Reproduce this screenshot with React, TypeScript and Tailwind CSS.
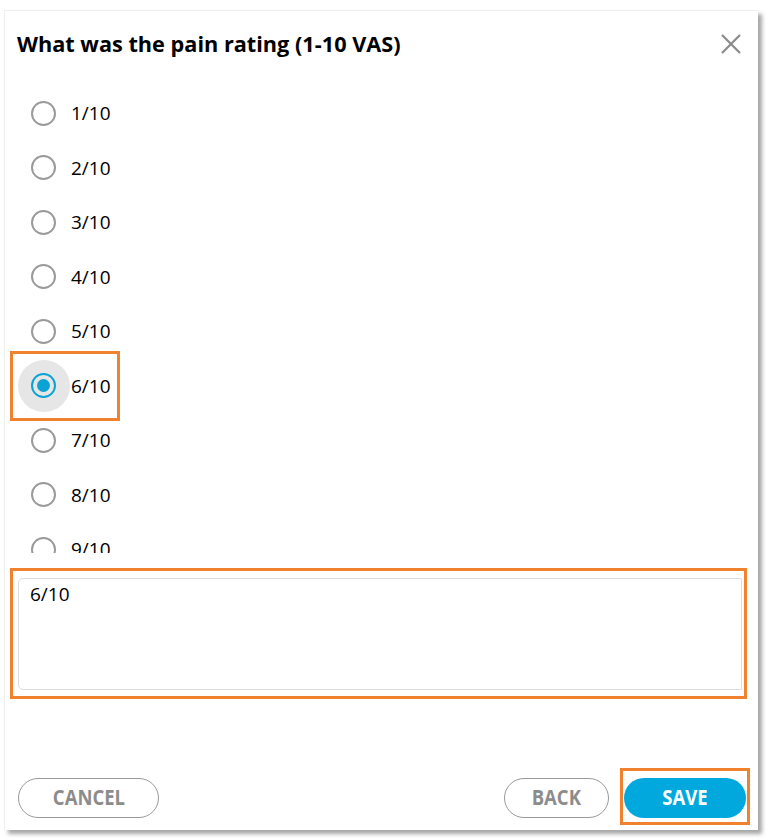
import { useState } from "react";

const options = ["1/10", "2/10", "3/10", "4/10", "5/10", "6/10", "7/10", "8/10", "9/10", "10/10"];

const btnText = "inline-block scale-x-[0.84] text-[22px] font-bold leading-none";

export default function App() {
  const [value, setValue] = useState("6/10");

  return (
    <div className="w-[768px] h-[840px] bg-white pt-[10px] pl-[4px] font-['Open_Sans',sans-serif]">
      <div className="w-[754px] h-[820px] bg-white border-t border-l border-[#eeeeee] shadow-[4px_4px_4px_rgba(0,0,0,0.35)] flex flex-col">
        {/* header */}
        <div className="h-[75px] flex items-start justify-between pl-[12px] pr-[16px] pt-[18px]">
          <h1 className="text-[21.7px] font-bold text-black leading-[30px]">What was the pain rating (1-10 VAS)</h1>
          <button className="mt-[4px] text-[#8a8a8a]">
            <svg width="22" height="22" viewBox="0 0 22 22" fill="none" stroke="currentColor" strokeWidth="2.2">
              <path d="M2 2 L20 20 M20 2 L2 20" />
            </svg>
          </button>
        </div>

        {/* options */}
        <div className="h-[467px] overflow-hidden">
          {options.map(o => {
            const checked = o === value;
            return (
              <div key={o} className="relative h-[54.5px] flex items-center pl-[26px]" onClick={() => setValue(o)}>
                {checked && (
                  <div className="absolute left-[5px] top-[-8px] w-[110px] h-[70px] border-[3px] border-[#f0812f]" />
                )}
                <div className="relative w-[25px] h-[25px] flex items-center justify-center">
                  {checked && <div className="absolute w-[52px] h-[52px] rounded-full bg-[#e6e6e6]" />}
                  <div className={`relative w-[25px] h-[25px] rounded-full border-2 flex items-center justify-center ${checked ? "border-[#0aa3d4]" : "border-[#9a9a9a]"}`}>
                    {checked && <div className="w-[13px] h-[13px] rounded-full bg-[#0aa3d4]" />}
                  </div>
                </div>
                <span className="relative ml-[15px] text-[19px] text-black">{o}</span>
              </div>
            );
          })}
        </div>

        {/* comment */}
        <div className="ml-[5px] mt-[15px] w-[737px] h-[131px] border-[3px] border-[#f0812f] pl-[5px] pt-[7px]">
          <textarea
            value={value}
            onChange={e => setValue(e.target.value)}
            className="block w-[724px] h-[112px] resize-none border border-[#dddddd] rounded-l-[5px] px-[11px] pt-[1px] pb-[6px] text-[19px] text-black bg-white outline-none"
          />
        </div>

        {/* footer */}
        <div className="mt-auto mb-[5px] flex items-center pl-[13px] pr-[8px]">
          <button className="w-[141px] h-[40px] mt-[3px] rounded-full border border-[#999999] text-[#8c8c8c]">
            <span className={btnText}>CANCEL</span>
          </button>
          <div className="flex-1" />
          <button className="w-[105px] h-[40px] mt-[3px] rounded-full border border-[#999999] text-[#8c8c8c]">
            <span className={btnText}>BACK</span>
          </button>
          <div className="ml-[11px] px-[1px] border-[3px] border-[#f0812f] pt-[7px] pb-[4px]">
            <button className="w-[122px] h-[40px] rounded-full bg-[#00a8de] text-white">
              <span className={btnText}>SAVE</span>
            </button>
          </div>
        </div>
      </div>
    </div>
  );
}
